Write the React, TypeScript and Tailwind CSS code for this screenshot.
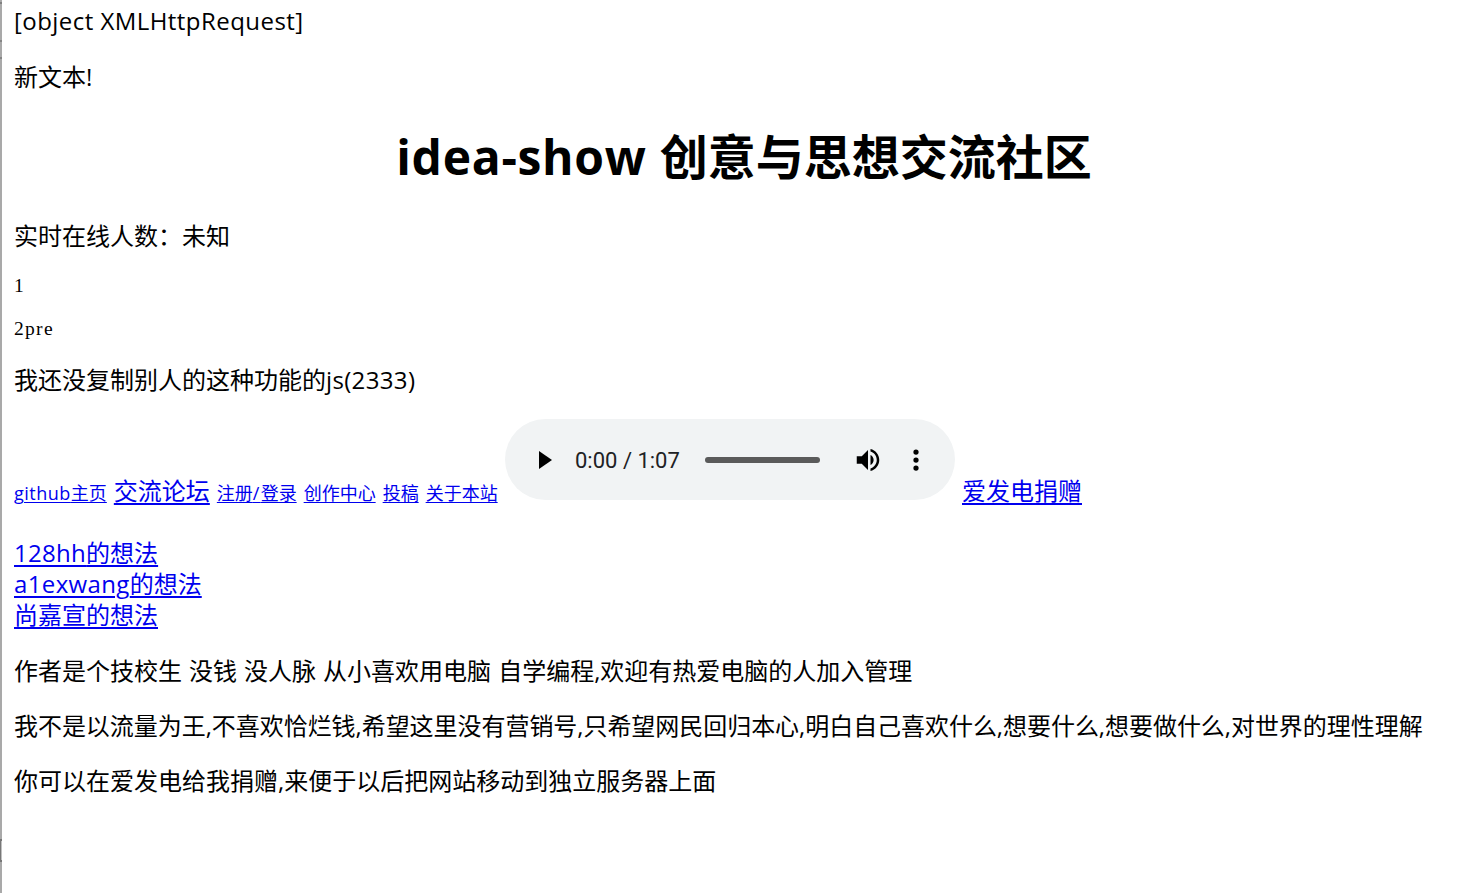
import type { ReactNode } from "react";

function Line({ children, className }: { children: ReactNode; className: string }) {
  return <p className={`whitespace-nowrap leading-8 ${className}`}>{children}</p>;
}

function Link({ children, small = false }: { children: ReactNode; small?: boolean }) {
  return (
    <a
      href="#"
      className={
        small
          ? "text-[18px] text-[#0000ee] underline decoration-1 underline-offset-[2px]"
          : "text-[24px] text-[#0000ee] underline decoration-2 underline-offset-[3px]"
      }
    >
      {children}
    </a>
  );
}

function AudioPlayer() {
  return (
    <div className="flex h-[81px] w-[450px] items-center rounded-full bg-[#f1f3f4] pl-[34px]">
      <svg viewBox="0 0 12 18" className="h-[18px] w-[13px] shrink-0" preserveAspectRatio="none">
        <path d="M0 0v18l12-9z" />
      </svg>
      <span className="ml-[23px] w-[130px] whitespace-nowrap pt-[2px] font-[Roboto,sans-serif] text-[22px] text-[#202124]">
        0:00 / 1:07
      </span>
      <div className="h-[6px] w-[115px] rounded-full bg-[#5a5a5a]" />
      <svg viewBox="0 0 24 24" className="ml-[33px] h-[30px] w-[30px] shrink-0">
        <path d="M3 9v6h4l5 5V4L7 9H3zm13.5 3c0-1.77-1.02-3.29-2.5-4.03v8.05c1.48-.73 2.5-2.25 2.5-4.02zM14 3.23v2.06c2.89.86 5 3.54 5 6.71s-2.11 5.85-5 6.71v2.06c4.01-.91 7-4.49 7-8.77s-2.99-7.86-7-8.77z" />
      </svg>
      <svg viewBox="0 0 24 24" className="ml-[18px] h-[30px] w-[30px] shrink-0">
        <circle cx="12" cy="5.6" r="2.1" />
        <circle cx="12" cy="12" r="2.1" />
        <circle cx="12" cy="18.4" r="2.1" />
      </svg>
    </div>
  );
}

export default function App() {
  return (
    <div className="flex h-[893px] w-[1461px] overflow-hidden bg-white font-['Open_Sans','Noto_Sans_CJK_SC',sans-serif] text-[24px] text-black">
      <div className="flex w-[2px] shrink-0 flex-col bg-[#a9a9a9]">
        <div className="mt-[2px] h-[2px] bg-[#808080]" />
        <div className="mt-[36px] h-[2px] bg-[#858585]" />
        <div className="mt-[15px] h-[2px] bg-[#858585]" />
        <div className="mt-[780px] h-[23px] border-y-2 border-l border-[#777777] bg-[#c0c0c0]" />
      </div>
      <main className="flex grow flex-col pl-[12px]">
        <Line className="mt-[5px] tracking-[0.45px]">[object XMLHttpRequest]</Line>
        <Line className="mt-[24px]">新文本!</Line>
        <h1 className="mt-[32px] whitespace-nowrap pl-[13px] text-center text-[48px] leading-[64px] font-bold">
          <span className="tracking-[0.7px]">idea-show </span>创意与思想交流社区
        </h1>
        <Line className="mt-[31px]">实时在线人数：未知</Line>
        <pre className="mt-[23px] font-['Liberation_Serif',serif] text-[19.5px] leading-[22px] tracking-[1.2px]">1</pre>
        <pre className="mt-[21px] font-['Liberation_Serif',serif] text-[19.5px] leading-[22px] tracking-[1.3px]">2pre</pre>
        <Line className="mt-[24px]">
          我还没复制别人的这种功能的<span className="tracking-[0.35px]">js(2333)</span>
        </Line>
        <div className="mt-[23px] flex h-[89px] items-start gap-[7px] whitespace-nowrap">
          <div className="mt-[56px] flex w-[484px] items-baseline gap-[7px] leading-8">
            <Link small>
              <span className="tracking-[0.5px]">github</span>主页
            </Link>
            <Link>交流论坛</Link>
            <Link small>
              注册<span className="tracking-[1.2px]">/</span>登录
            </Link>
            <Link small>创作中心</Link>
            <Link small>投稿</Link>
            <Link small>关于本站</Link>
          </div>
          <AudioPlayer />
          <div className="mt-[56px] leading-8">
            <Link>爱发电捐赠</Link>
          </div>
        </div>
        <div className="mt-[29px] flex flex-col items-start leading-[31px]">
          <Link>
            <span className="tracking-[0.3px]">128hh</span>的想法
          </Link>
          <Link>
            <span className="tracking-[0.37px]">a1exwang</span>的想法
          </Link>
          <Link>尚嘉宣的想法</Link>
        </div>
        <Line className="mt-[25px] [word-spacing:0.8px]">
          作者是个技校生 没钱 没人脉 从小喜欢用电脑 自学编程,欢迎有热爱电脑的人加入管理
        </Line>
        <Line className="mt-[23px] tracking-[-0.045px]">
          我不是以流量为王,不喜欢恰烂钱,希望这里没有营销号,只希望网民回归本心,明白自己喜欢什么,想要什么,想要做什么,对世界的理性理解
        </Line>
        <Line className="mt-[23px]">你可以在爱发电给我捐赠,来便于以后把网站移动到独立服务器上面</Line>
      </main>
    </div>
  );
}
